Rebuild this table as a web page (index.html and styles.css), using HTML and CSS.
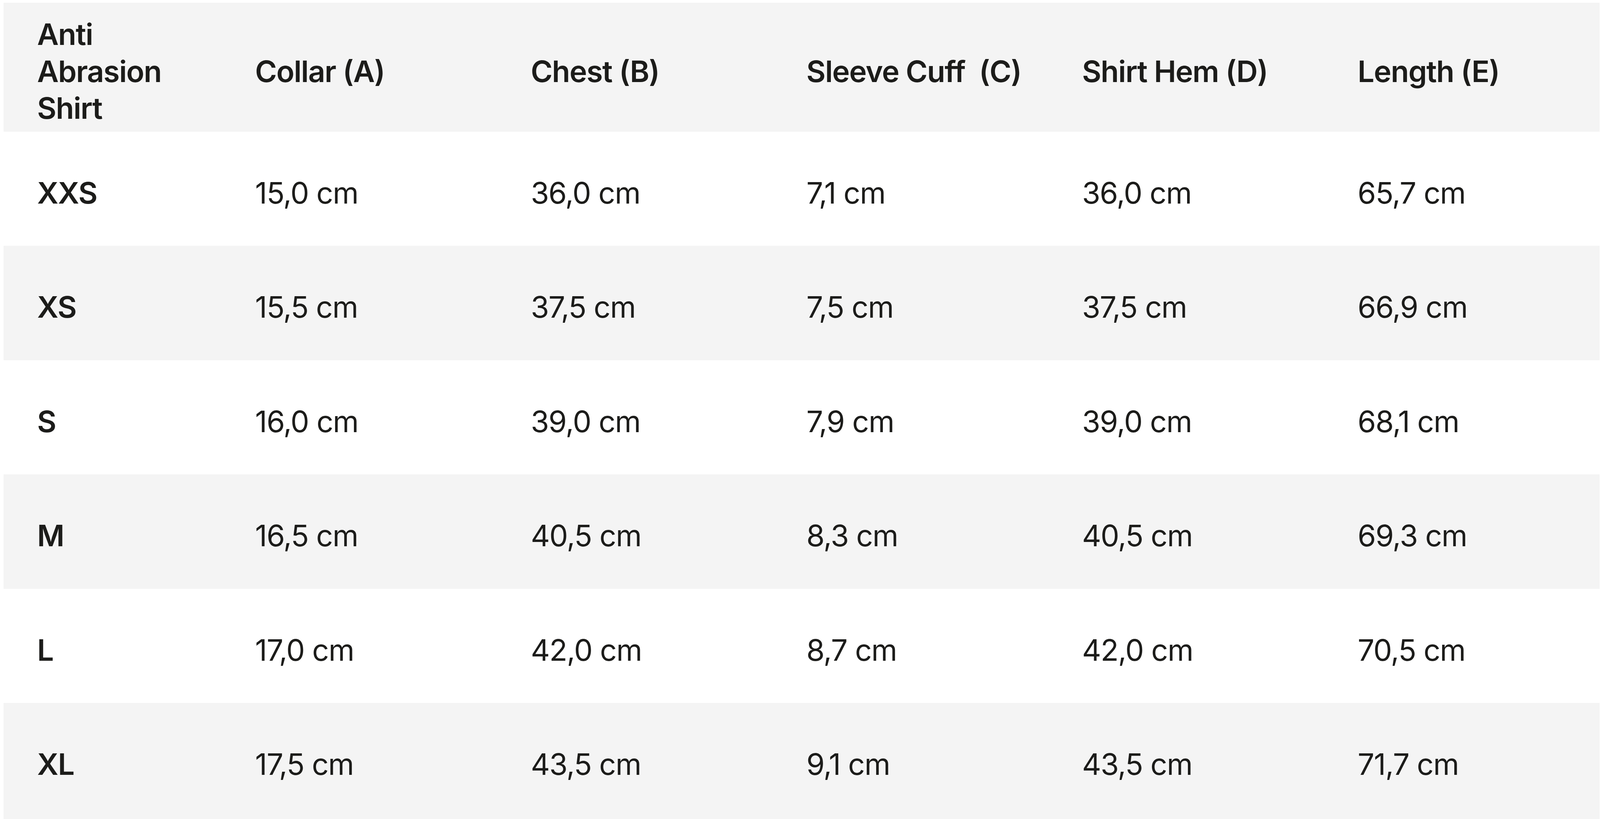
FILE: index.html
```html
<!DOCTYPE html>
<html lang="en">
<head>
<meta charset="utf-8">
<title>Anti Abrasion Shirt – Size chart</title>
<link rel="stylesheet" href="styles.css">
</head>
<body>
<div class="size-table" role="table">
  <div class="row head" role="row">
    <div class="cell first" role="columnheader">Anti Abrasion Shirt</div>
    <div class="cell" role="columnheader">Collar (A)</div>
    <div class="cell" role="columnheader">Chest (B)</div>
    <div class="cell" role="columnheader">Sleeve Cuff&nbsp; (C)</div>
    <div class="cell" role="columnheader">Shirt Hem (D)</div>
    <div class="cell" role="columnheader">Length (E)</div>
  </div>
  <div class="row" role="row">
    <div class="cell size" role="rowheader">XXS</div>
    <div class="cell" role="cell">15,0 cm</div>
    <div class="cell" role="cell">36,0 cm</div>
    <div class="cell" role="cell">7,1 cm</div>
    <div class="cell" role="cell">36,0 cm</div>
    <div class="cell" role="cell">65,7 cm</div>
  </div>
  <div class="row alt" role="row">
    <div class="cell size" role="rowheader">XS</div>
    <div class="cell" role="cell">15,5 cm</div>
    <div class="cell" role="cell">37,5 cm</div>
    <div class="cell" role="cell">7,5 cm</div>
    <div class="cell" role="cell">37,5 cm</div>
    <div class="cell" role="cell">66,9 cm</div>
  </div>
  <div class="row" role="row">
    <div class="cell size" role="rowheader">S</div>
    <div class="cell" role="cell">16,0 cm</div>
    <div class="cell" role="cell">39,0 cm</div>
    <div class="cell" role="cell">7,9 cm</div>
    <div class="cell" role="cell">39,0 cm</div>
    <div class="cell" role="cell">68,1 cm</div>
  </div>
  <div class="row alt" role="row">
    <div class="cell size" role="rowheader">M</div>
    <div class="cell" role="cell">16,5 cm</div>
    <div class="cell" role="cell">40,5 cm</div>
    <div class="cell" role="cell">8,3 cm</div>
    <div class="cell" role="cell">40,5 cm</div>
    <div class="cell" role="cell">69,3 cm</div>
  </div>
  <div class="row" role="row">
    <div class="cell size" role="rowheader">L</div>
    <div class="cell" role="cell">17,0 cm</div>
    <div class="cell" role="cell">42,0 cm</div>
    <div class="cell" role="cell">8,7 cm</div>
    <div class="cell" role="cell">42,0 cm</div>
    <div class="cell" role="cell">70,5 cm</div>
  </div>
  <div class="row alt last" role="row">
    <div class="cell size" role="rowheader">XL</div>
    <div class="cell" role="cell">17,5 cm</div>
    <div class="cell" role="cell">43,5 cm</div>
    <div class="cell" role="cell">9,1 cm</div>
    <div class="cell" role="cell">43,5 cm</div>
    <div class="cell" role="cell">71,7 cm</div>
  </div>
</div>
</body>
</html>
```
FILE: styles.css
```css
html, body {
  margin: 0;
  padding: 0;
  background: #ffffff;
}

body {
  font-family: Inter, "Noto Sans", "Liberation Sans", sans-serif;
  color: #1c1c1a;
  overflow: hidden;
}

.size-table {
  margin: 7px 0.03vw 0 0.21vw;
  display: flex;
  flex-direction: column;
}

.row {
  display: grid;
  grid-template-columns: 13.655% repeat(5, minmax(0, 1fr));
  background: #ffffff;
  padding: 109px 0 89px;
}

.row.alt,
.row.head {
  background: #f4f4f4;
}

.row.head {
  padding: 33px 0 13px;
}

.row.last {
  padding-bottom: 120px;
}

.cell {
  display: flex;
  align-items: center;
  min-width: 0;
  padding: 0 0 0 2.11vw;
  font-size: 76px;
  line-height: 94.5px;
  font-weight: 400;
  letter-spacing: -0.02em;
  white-space: nowrap;
}

.head .cell,
.cell.size {
  font-weight: 600;
}

.head .cell.first {
  white-space: normal;
  padding-right: 2vw;
}
```
